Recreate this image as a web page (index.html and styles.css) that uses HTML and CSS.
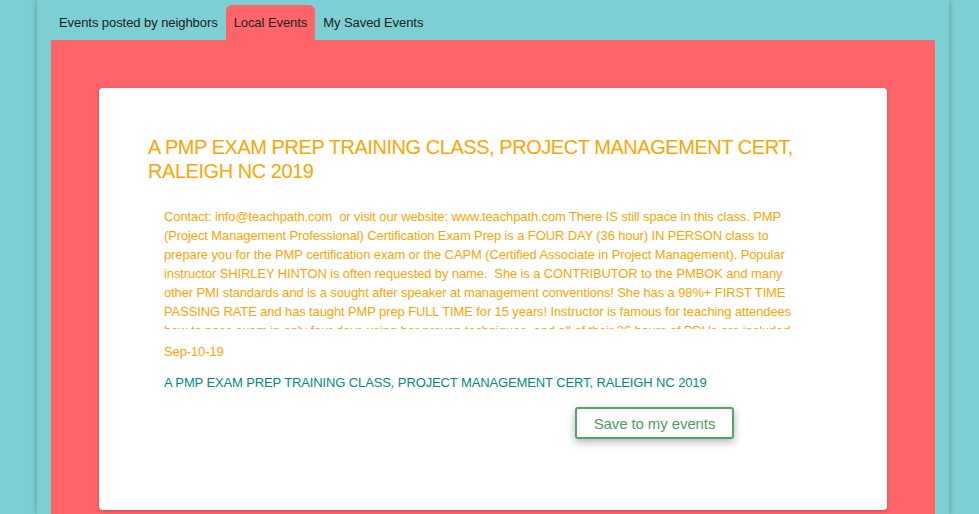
FILE: index.html
```html
<!DOCTYPE html>
<html>
<head>
<meta charset="utf-8">
<link rel="stylesheet" href="styles.css">
</head>
<body>
<div class="page">
  <nav class="tabs">
    <div class="tab">Events posted by neighbors</div>
    <div class="tab active">Local Events</div>
    <div class="tab">My Saved Events</div>
  </nav>
  <section class="panel">
    <article class="card">
      <h1 class="title">A PMP EXAM PREP TRAINING CLASS, PROJECT MANAGEMENT CERT, RALEIGH NC 2019</h1>
      <div class="desc">Contact: info@teachpath.com&nbsp; or visit our website: www.teachpath.com There IS still space in this class. PMP (Project Management Professional) Certification Exam Prep is a FOUR DAY (36 hour) IN PERSON class to prepare you for the PMP certification exam or the CAPM (Certified Associate in Project Management). Popular instructor SHIRLEY HINTON is often requested by name.&nbsp; She is a CONTRIBUTOR to the PMBOK and many other PMI standards and is a sought after speaker at management conventions! She has a 98%+ FIRST TIME PASSING RATE and has taught PMP prep FULL TIME for 15 years! Instructor is famous for teaching attendees how to pass exam in only four days using her proven techniques, and all of their 36 hours of PDUs are included in this class.</div>
      <div class="date">Sep-10-19</div>
      <div class="subtitle">A PMP EXAM PREP TRAINING CLASS, PROJECT MANAGEMENT CERT, RALEIGH NC 2019</div>
      <div class="actions"><button class="save">Save to my events</button></div>
    </article>
  </section>
</div>
</body>
</html>
```
FILE: styles.css
```css
html, body {
  margin: 0;
  padding: 0;
  height: 100%;
  overflow: hidden;
}
body {
  background: #7ccfd2;
  font-family: "Liberation Sans", Arial, sans-serif;
}
.page {
  width: 884px;
  margin-left: 37px;
  padding: 5px 14px 0;
  height: 509px;
  background: #7ccfd2;
  box-shadow: 0 0 6px rgba(0, 0, 0, 0.28);
}
.tabs {
  display: flex;
  height: 35px;
}
.tab {
  padding: 0 8px;
  font-size: 13px;
  letter-spacing: -0.07px;
  color: #222;
  line-height: 35px;
  border-radius: 6px 6px 0 0;
}
.tab.active {
  background: #ff6469;
}
.panel {
  background: #ff6469;
  padding: 48px 48px 0;
  height: 426px;
}
.card {
  background: #fff;
  border-radius: 4px;
  padding: 47px 49px 0;
  height: 375px;
  box-shadow: 0 1px 4px rgba(0, 0, 0, 0.2);
}
.title {
  margin: 0;
  font-size: 20px;
  letter-spacing: -0.45px;
  line-height: 24px;
  font-weight: normal;
  color: #ffa500;
}
.desc {
  margin-top: 24px;
  padding: 0 38px 0 16px;
  font-size: 13px;
  letter-spacing: -0.12px;
  line-height: 19px;
  color: #ffa500;
  height: 122px;
  overflow: hidden;
}
.date {
  margin-top: 13px;
  padding: 0 16px;
  font-size: 13px;
  letter-spacing: -0.12px;
  line-height: 19px;
  color: #ffa500;
}
.subtitle {
  margin-top: 12px;
  padding: 0 16px;
  font-size: 13px;
  letter-spacing: -0.12px;
  line-height: 19px;
  color: #008b8b;
}
.actions {
  margin-top: 15px;
  padding-left: 427px;
}
.save {
  width: 159px;
  height: 32px;
  background: #fff;
  border: 2px solid #52a868;
  border-radius: 3px;
  color: #4aa062;
  font-family: "Liberation Sans", Arial, sans-serif;
  font-size: 15px;
  letter-spacing: -0.1px;
  box-shadow: 0 3px 8px rgba(0, 0, 0, 0.3);
  padding: 0;
}
```
